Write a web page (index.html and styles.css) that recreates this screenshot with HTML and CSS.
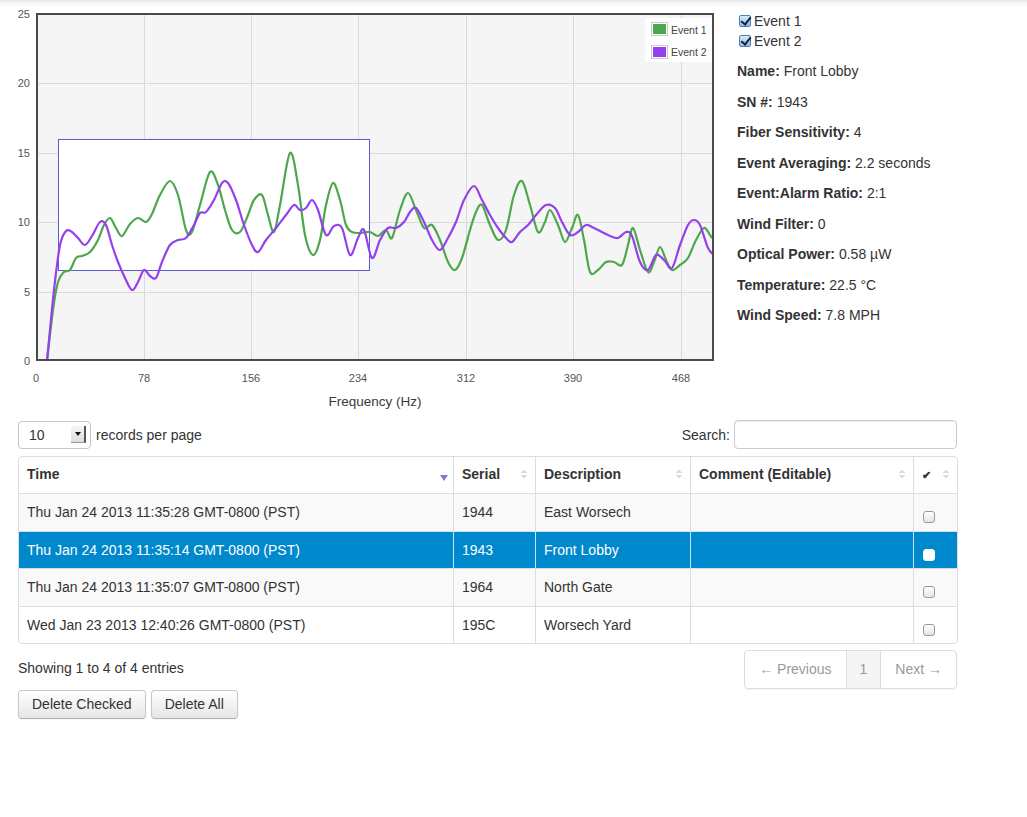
FILE: index.html
```html
<!DOCTYPE html>
<html>
<head>
<meta charset="utf-8">
<title>Events</title>
<link rel="stylesheet" href="styles.css">
</head>
<body>
<div class="top">
  <div class="chart">
    <svg width="720" height="412" viewBox="0 0 720 412">
      <defs>
        <clipPath id="plotclip"><rect x="37" y="14" width="676" height="346"/></clipPath>
      </defs>
      <rect class="plot-bg" x="36" y="13" width="678" height="348"/>
      <g class="grid">
        <line x1="144.5" y1="13" x2="144.5" y2="361"/>
        <line x1="251.5" y1="13" x2="251.5" y2="361"/>
        <line x1="358.5" y1="13" x2="358.5" y2="361"/>
        <line x1="466.5" y1="13" x2="466.5" y2="361"/>
        <line x1="573.5" y1="13" x2="573.5" y2="361"/>
        <line x1="681.5" y1="13" x2="681.5" y2="361"/>
        <line x1="36" y1="83.5" x2="714" y2="83.5"/>
        <line x1="36" y1="153.5" x2="714" y2="153.5"/>
        <line x1="36" y1="222.5" x2="714" y2="222.5"/>
        <line x1="36" y1="292.5" x2="714" y2="292.5"/>
      </g>
      <g class="tick ytick">
        <text x="30" y="18">25</text>
        <text x="30" y="87">20</text>
        <text x="30" y="157">15</text>
        <text x="30" y="226">10</text>
        <text x="30" y="296">5</text>
        <text x="30" y="365">0</text>
      </g>
      <g class="tick xtick">
        <text x="36" y="382">0</text>
        <text x="144" y="382">78</text>
        <text x="251" y="382">156</text>
        <text x="358" y="382">234</text>
        <text x="466" y="382">312</text>
        <text x="573" y="382">390</text>
        <text x="681" y="382">468</text>
      </g>
      <text class="axis-title" x="375" y="406">Frequency (Hz)</text>
      <rect class="selection" x="58.5" y="139.5" width="311" height="131"/>
      <g clip-path="url(#plotclip)">
        <path id="series-green" class="series green" d=""/>
        <path id="series-purple" class="series purple" d=""/>
      </g>
      <rect class="plot-border" x="37" y="14" width="676" height="346"/>
      <g class="legend">
        <rect class="legend-bg" x="645" y="18" width="67" height="44"/>
        <rect class="swatch-frame" x="651.5" y="22.5" width="16" height="13"/>
        <rect class="swatch-green" x="653" y="24" width="13" height="10"/>
        <text class="legend-label" x="671" y="33.5">Event 1</text>
        <rect class="swatch-frame" x="651.5" y="45.5" width="16" height="13"/>
        <rect class="swatch-purple" x="653" y="47" width="13" height="10"/>
        <text class="legend-label" x="671" y="55.5">Event 2</text>
      </g>
    </svg>
  </div>
  <div class="info">
    <label class="event-toggle"><input type="checkbox" class="cb" checked> Event 1</label>
    <label class="event-toggle"><input type="checkbox" class="cb" checked> Event 2</label>
    <div class="details">
      <p><b>Name:</b> Front Lobby</p>
      <p><b>SN #:</b> 1943</p>
      <p><b>Fiber Sensitivity:</b> 4</p>
      <p><b>Event Averaging:</b> 2.2 seconds</p>
      <p><b>Event:Alarm Ratio:</b> 2:1</p>
      <p><b>Wind Filter:</b> 0</p>
      <p><b>Optical Power:</b> 0.58 µW</p>
      <p><b>Temperature:</b> 22.5 °C</p>
      <p><b>Wind Speed:</b> 7.8 MPH</p>
    </div>
  </div>
</div>

<div class="records">
  <div class="controls">
    <div class="length">
      <div class="select"><span class="select-value">10</span><span class="select-btn"><span class="select-arrow"></span></span></div>
      <span>records per page</span>
    </div>
    <div class="search">
      <span>Search:</span>
      <input type="text" class="search-input">
    </div>
  </div>

  <table class="dt">
    <colgroup>
      <col class="c-time"><col class="c-serial"><col class="c-desc"><col class="c-comment"><col class="c-check">
    </colgroup>
    <thead>
      <tr>
        <th>Time<i class="sort-desc"></i></th>
        <th>Serial<i class="sort-both"></i></th>
        <th>Description<i class="sort-both"></i></th>
        <th>Comment (Editable)<i class="sort-both"></i></th>
        <th><span class="checkmark">✔</span><i class="sort-both"></i></th>
      </tr>
    </thead>
    <tbody>
      <tr class="odd">
        <td>Thu Jan 24 2013 11:35:28 GMT-0800 (PST)</td><td>1944</td><td>East Worsech</td><td></td><td class="chk"><input type="checkbox" class="cb"></td>
      </tr>
      <tr class="selected">
        <td>Thu Jan 24 2013 11:35:14 GMT-0800 (PST)</td><td>1943</td><td>Front Lobby</td><td></td><td class="chk"><input type="checkbox" class="cb"></td>
      </tr>
      <tr class="odd">
        <td>Thu Jan 24 2013 11:35:07 GMT-0800 (PST)</td><td>1964</td><td>North Gate</td><td></td><td class="chk"><input type="checkbox" class="cb"></td>
      </tr>
      <tr>
        <td>Wed Jan 23 2013 12:40:26 GMT-0800 (PST)</td><td>195C</td><td>Worsech Yard</td><td></td><td class="chk"><input type="checkbox" class="cb"></td>
      </tr>
    </tbody>
  </table>

  <div class="footer">
    <div class="showing">Showing 1 to 4 of 4 entries</div>
    <ul class="pagination">
      <li class="disabled">← Previous</li>
      <li class="active">1</li>
      <li class="disabled">Next →</li>
    </ul>
  </div>
  <div class="actions">
    <button class="btn">Delete Checked</button>
    <button class="btn">Delete All</button>
  </div>
</div>
<script src="script.js"></script>
</body>
</html>
```

FILE: styles.css
```css
* { box-sizing: border-box; }

html, body { margin: 0; padding: 0; }

body {
  font-family: "Liberation Sans", Arial, Helvetica, sans-serif;
  font-size: 14px;
  line-height: 20px;
  color: #333;
  background: #fff linear-gradient(#e6e6e6, #f6f6f6 3px, #fff 7px) no-repeat;
  background-size: 100% 8px;
  width: 1027px;
  height: 817px;
  overflow: hidden;
}

.top { display: flex; }

.chart { width: 720px; height: 412px; }
.chart svg { display: block; }

.plot-bg { fill: #f5f5f5; }
.grid line { stroke: #d9d9d9; stroke-width: 1; }
.plot-border { fill: none; stroke: #4a4a4a; stroke-width: 2; }

.tick { font-size: 11px; fill: #545454; }
.ytick { text-anchor: end; }
.xtick { text-anchor: middle; }
.axis-title { font-size: 13.5px; fill: #3a3a3a; text-anchor: middle; }

.selection { fill: #ffffff; stroke: #5a5ad0; stroke-width: 1; }

.series { fill: none; stroke-width: 2.2; stroke-linejoin: round; stroke-linecap: round; }
.green { stroke: #4da74d; }
.purple { stroke: #9440ed; }

.legend-bg { fill: #ffffff; opacity: 0.85; }
.swatch-frame { fill: #fff; stroke: #cccccc; stroke-width: 1; }
.swatch-green { fill: #4da74d; }
.swatch-purple { fill: #9440ed; }
.legend-label { font-size: 10.5px; fill: #444; }

.info { padding-top: 11px; margin-left: 17px; }

.event-toggle { display: flex; align-items: center; gap: 3px; height: 20px; padding-left: 2px; }

.details { margin-top: 10px; }
.details p { margin: 0 0 10.5px; line-height: 20px; }

.cb {
  -webkit-appearance: none;
  appearance: none;
  width: 12px;
  height: 12px;
  margin: 0;
  border: 1px solid #9a9a9a;
  border-radius: 3px;
  background: linear-gradient(#ffffff, #e4e4e4);
  position: relative;
  flex: none;
}
.cb:checked {
  border-color: #4e7fb4;
  border-radius: 2px;
  background: linear-gradient(#d9eafb, #8dbbe8);
}
.cb:checked::after {
  content: "";
  position: absolute;
  left: 3px;
  top: -1px;
  width: 4px;
  height: 8px;
  border: solid #13233c;
  border-width: 0 2px 2px 0;
  transform: rotate(38deg);
}

.records { margin-left: 18px; width: 939px; }

.controls {
  display: flex;
  justify-content: space-between;
  align-items: center;
  margin-top: 8px;
  height: 29px;
}
.length { display: flex; align-items: center; gap: 5px; }
.select {
  width: 73px;
  height: 28px;
  border: 1px solid #c4c4c4;
  border-radius: 4px;
  background: #fff;
  display: flex;
  align-items: center;
  justify-content: space-between;
  padding: 0 4px 0 10px;
}
.select-btn {
  width: 15px;
  height: 17px;
  background: linear-gradient(#f7f7f7, #dcdcdc);
  border-right: 2px solid #555;
  border-bottom: 1px solid #999;
  display: flex;
  align-items: center;
  justify-content: center;
}
.select-arrow {
  width: 0; height: 0;
  border-left: 3px solid transparent;
  border-right: 3px solid transparent;
  border-top: 4px solid #111;
}
.search { display: flex; align-items: center; gap: 4px; }
.search-input {
  width: 223px;
  height: 29px;
  border: 1px solid #ccc;
  border-radius: 4px;
  box-shadow: inset 0 1px 1px rgba(0,0,0,0.075);
  font: inherit;
  padding: 4px 6px;
  outline: none;
}

.dt {
  margin-top: 7px;
  width: 940px;
  table-layout: fixed;
  border-collapse: separate;
  border-spacing: 0;
  border: 1px solid #ddd;
  border-radius: 4px;
}
.c-time { width: 434px; }
.c-serial { width: 82px; }
.c-desc { width: 155px; }
.c-comment { width: 223px; }
.c-check { width: 44px; }

.dt th, .dt td {
  line-height: 20px;
  text-align: left;
  vertical-align: top;
  white-space: nowrap;
}
.dt th { font-weight: bold; height: 35px; padding: 7px 8px 8px; }
.dt td { border-top: 1px solid #ddd; padding: 8px 8px 8.5px; height: 37.5px; }
.dt th + th, .dt td + td { border-left: 1px solid #ddd; }
.dt tr.odd td { background: #f9f9f9; }
.dt tr.selected td { background: #0088cc; color: #fff; border-top-color: #c8e3f2; }
.dt tr.selected td + td { border-left-color: #c8e3f2; }
.dt td.chk { padding: 8px 8px 0; }
.dt td.chk .cb { display: block; margin: 9px 0 0 1px; }
.dt tr.selected .cb { border-color: #ffffff; background: #fff; }

.checkmark { font-size: 11px; }

.sort-desc {
  float: right;
  margin: 11px -3px 0 0;
  width: 0; height: 0;
  border-left: 4px solid transparent;
  border-right: 4px solid transparent;
  border-top: 6px solid #7b7bcc;
}
.sort-both {
  float: right;
  width: 6px;
  height: 11px;
  margin-top: 5px;
  background:
    linear-gradient(to bottom right, transparent 50%, #dcdcdc 50%) 0 0 / 3px 4px no-repeat,
    linear-gradient(to bottom left, transparent 50%, #dcdcdc 50%) 3px 0 / 3px 4px no-repeat,
    linear-gradient(to top right, transparent 50%, #dcdcdc 50%) 0 6px / 3px 4px no-repeat,
    linear-gradient(to top left, transparent 50%, #dcdcdc 50%) 3px 6px / 3px 4px no-repeat;
}

.footer {
  display: flex;
  justify-content: space-between;
  align-items: flex-start;
  margin-top: 6px;
}
.showing { padding-top: 8px; }
.pagination {
  list-style: none;
  margin: 0;
  padding: 0;
  display: flex;
  border: 1px solid #ddd;
  border-radius: 4px;
  box-shadow: 0 1px 2px rgba(0,0,0,0.05);
}
.pagination li {
  line-height: 37px;
  padding: 0 14px;
  color: #999;
}
.pagination li + li { border-left: 1px solid #ddd; }
.pagination li.active { background: #f5f5f5; padding: 0 13px; }

.actions { display: flex; gap: 5px; margin-top: 1px; }
.btn {
  font: inherit;
  color: #333;
  line-height: 20px;
  padding: 3px 13px 4px;
  border: 1px solid #c8c8c8;
  border-bottom-color: #b3b3b3;
  border-radius: 4px;
  background: linear-gradient(#ffffff, #e6e6e6);
  box-shadow: inset 0 1px 0 rgba(255,255,255,0.2), 0 1px 2px rgba(0,0,0,0.05);
}
```

FILE: script.js
```js
(function () {
  var green = [
    [47,361],[53,310],[58,282],[64,272],[70,270],[76,258],[82,256],[90,252],[98,240],[104,225],[110,218],
    [116,228],[122,236],[130,224],[138,218],[146,222],[152,214],[160,195],[170,181],[178,195],[186,230],
    [192,232],[200,205],[210,172],[218,185],[225,210],[232,230],[240,232],[248,215],[254,200],[262,195],
    [268,215],[274,232],[280,205],[290,153],[298,185],[305,235],[313,255],[320,240],[326,205],[333,183],
    [340,200],[346,225],[352,232],[360,233],[370,232],[378,236],[386,230],[392,238],[400,210],[408,193],
    [416,210],[424,228],[432,225],[440,240],[448,262],[455,270],[462,258],[470,230],[476,212],[482,205],
    [490,225],[498,240],[506,230],[514,195],[522,181],[530,205],[538,232],[545,222],[550,210],[558,225],
    [565,242],[572,228],[578,215],[584,240],[590,272],[598,270],[606,262],[614,262],[622,265],[628,245],
    [633,228],[640,250],[648,272],[654,262],[660,247],[666,260],[672,270],[680,265],[688,258],[696,240],
    [704,228],[710,235],[714,240]
  ];
  var purple = [
    [47,361],[54,290],[60,245],[66,231],[72,232],[78,238],[85,245],[92,236],[100,222],[106,225],[112,245],
    [118,262],[125,278],[132,290],[138,282],[144,270],[150,276],[156,278],[162,262],[170,245],[178,240],
    [186,238],[194,225],[200,213],[206,212],[214,200],[222,183],[228,183],[236,200],[244,225],[252,245],
    [258,252],[266,240],[276,228],[286,215],[294,205],[300,210],[306,208],[312,200],[318,210],[326,235],
    [334,226],[342,228],[350,255],[358,238],[364,230],[372,258],[380,240],[388,228],[396,228],[404,222],
    [410,212],[416,208],[424,222],[432,240],[440,250],[448,238],[456,222],[464,200],[474,186],[482,200],
    [490,215],[498,228],[506,238],[512,242],[520,232],[528,225],[536,215],[546,205],[555,208],[562,222],
    [570,235],[578,232],[586,225],[594,228],[602,232],[610,236],[618,238],[626,232],[632,236],[640,262],
    [648,270],[656,255],[664,260],[672,268],[680,245],[688,225],[694,220],[700,225],[708,248],[714,255]
  ];
  function spline(pts) {
    var d = "M" + pts[0][0] + "," + pts[0][1];
    for (var i = 0; i < pts.length - 1; i++) {
      var p0 = pts[Math.max(i - 1, 0)], p1 = pts[i], p2 = pts[i + 1], p3 = pts[Math.min(i + 2, pts.length - 1)];
      var c1x = p1[0] + (p2[0] - p0[0]) / 6, c1y = p1[1] + (p2[1] - p0[1]) / 6;
      var c2x = p2[0] - (p3[0] - p1[0]) / 6, c2y = p2[1] - (p3[1] - p1[1]) / 6;
      d += " C" + c1x.toFixed(1) + "," + c1y.toFixed(1) + " " + c2x.toFixed(1) + "," + c2y.toFixed(1) + " " + p2[0] + "," + p2[1];
    }
    return d;
  }
  document.getElementById("series-green").setAttribute("d", spline(green));
  document.getElementById("series-purple").setAttribute("d", spline(purple));
})();
```
